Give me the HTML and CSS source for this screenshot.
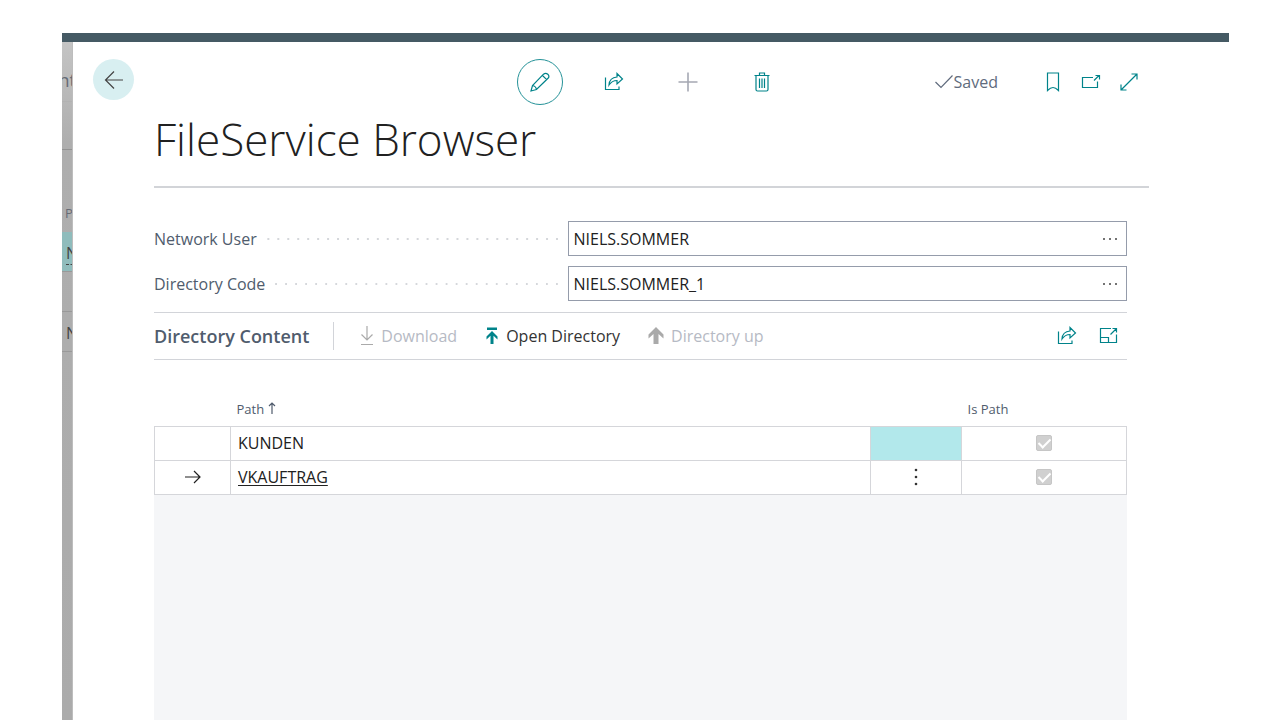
FILE: index.html
```html
<!DOCTYPE html>
<html lang="en">
<head>
  <meta charset="UTF-8">
  <meta name="viewport" content="width=device-width, initial-scale=1.0">
  <title>FileService Browser</title>
  <link rel="stylesheet" href="styles.css">
</head>
<body>

<div class="app">
  <div class="topbar"></div>
  <div class="workspace">

    <!-- list page behind the dialog -->
    <div class="behind">
      <div class="behind-head">nt</div>
      <div class="behind-bar"></div>
      <div class="behind-col">P</div>
      <div class="behind-row active"><span>N</span></div>
      <div class="behind-row"></div>
      <div class="behind-row">N</div>
    </div>

    <main class="dialog">
      <header class="header">
        <button class="back" aria-label="Back">
          <svg width="20" height="20" viewBox="0 0 20 20"><path d="M19 10H1.500M10 1.500L1.500 10L10 18.500"/></svg>
        </button>

        <div class="tools">
          <button class="tool edit" aria-label="Edit">
            <svg width="20" height="20" viewBox="0 0 20 20"><path d="M1 19L2.500 13.500L13.500 2.200Q15.700 .3 17.800 2.300T18 6.300L6.500 17.500ZM12.500 3.500L16.700 7.700M2.500 13.500Q5.800 14 6.500 17.500"/></svg>
          </button>
          <button class="tool" aria-label="Share">
            <svg width="20" height="20" viewBox="0 0 20 20"><path d="M1.500 5.500V17.500H15V14.500"/><path d="M5 13Q5.500 5.500 13 5V1.500L18.500 7L13 12V8.500Q8 8.500 5 13Z"/></svg>
          </button>
          <button class="tool plus" aria-label="New">
            <svg width="20" height="20" viewBox="0 0 20 20"><path d="M10 .5V19.500M.5 10H19.500"/></svg>
          </button>
          <button class="tool" aria-label="Delete">
            <svg width="20" height="20" viewBox="0 0 20 20"><path d="M2.500 3.500H17.500M7.500 3V1H12.500V3M4 4V17.500Q4 19 5.500 19H14.500Q16 19 16 17.500V4M7.500 6.500V16M10 6.500V16M12.500 6.500V16"/></svg>
          </button>
        </div>

        <div class="status">
          <span class="saved">
            <svg width="20" height="16" viewBox="0 0 20 16"><path d="M1.500 8L7 13.500L18.500 1.500"/></svg>Saved
          </span>
          <button class="small" aria-label="Bookmark">
            <svg width="20" height="20" viewBox="0 0 20 20"><path d="M4.500 1H15.500V18.500Q12.500 15.500 10 15.500T4.500 18.500Z"/></svg>
          </button>
          <button class="small" aria-label="Open in new window">
            <svg width="20" height="20" viewBox="0 0 20 20"><path d="M12 5.500H1.500V15.500H16.500V9.500M13 8.500L18 3.500M14.500 3.500H18.500V7.500"/></svg>
          </button>
          <button class="small" aria-label="Expand">
            <svg width="20" height="20" viewBox="0 0 20 20"><path d="M2 18L18 2M12.500 2H18V7.500M2 12.500V18H7.500"/></svg>
          </button>
        </div>
      </header>

      <div class="page">
        <h1>FileService Browser</h1>

        <div class="content">
          <div class="field">
            <label for="network-user"><span>Network User</span></label>
            <div class="lookup">
              <input type="text" id="network-user" value="NIELS.SOMMER">
              <button class="more" aria-label="Look up network user"><svg width="16" height="4" viewBox="0 0 16 4"><circle cx="2" cy="2" r="1"/><circle cx="8" cy="2" r="1"/><circle cx="14" cy="2" r="1"/></svg></button>
            </div>
          </div>
          <div class="field">
            <label for="directory-code"><span>Directory Code</span></label>
            <div class="lookup">
              <input type="text" id="directory-code" value="NIELS.SOMMER_1">
              <button class="more" aria-label="Look up directory code"><svg width="16" height="4" viewBox="0 0 16 4"><circle cx="2" cy="2" r="1"/><circle cx="8" cy="2" r="1"/><circle cx="14" cy="2" r="1"/></svg></button>
            </div>
          </div>

          <div class="section">
            <h2>Directory Content</h2>
            <div class="actions">
              <button class="action" disabled>
                <svg width="14" height="20" viewBox="0 0 14 20"><path d="M7 0V14M1.500 8.500L7 14L12.500 8.500M1 18.500H13"/></svg>Download
              </button>
              <button class="action">
                <svg class="teal" width="14" height="20" viewBox="0 0 14 20"><path class="solid" d="M2 1.500H12V4H2ZM7 5L12.500 10.500V13.500L8.500 9.700V18H5.500V9.700L1.500 13.500V10.500Z"/></svg>Open Directory
              </button>
              <button class="action" disabled>
                <svg width="16" height="20" viewBox="0 0 16 20"><path class="solid" d="M8 1L15.500 8.500V12.500L10.500 8V18H5.500V8L.5 12.500V8.500Z"/></svg>Directory up
              </button>
            </div>
            <div class="section-icons">
              <button class="small" aria-label="Share list">
                <svg width="20" height="20" viewBox="0 0 20 20"><path d="M1.500 5.500V17.500H15V14.500"/><path d="M5 13Q5.500 5.500 13 5V1.500L18.500 7L13 12V8.500Q8 8.500 5 13Z"/></svg>
              </button>
              <button class="small" aria-label="Focus mode">
                <svg width="20" height="20" viewBox="0 0 20 20"><path d="M12 2.500H1.500V16.500H17.500V8.500M1.500 11.500H9.500V16.500M11.500 8.500L17 3M13.500 2.500H17.500V6.500"/></svg>
              </button>
            </div>
          </div>

          <table class="list">
            <colgroup><col class="c-mark"><col><col class="c-menu"><col class="c-bool"></colgroup>
            <thead>
              <tr>
                <th></th>
                <th>Path <svg width="8" height="12" viewBox="0 0 8 12"><path d="M4 12V1M1 4L4 1L7 4"/></svg></th>
                <th></th>
                <th>Is Path</th>
              </tr>
            </thead>
            <tbody>
              <tr>
                <td></td>
                <td>KUNDEN</td>
                <td class="selected"></td>
                <td class="center"><input type="checkbox" aria-label="KUNDEN is path" checked disabled></td>
              </tr>
              <tr>
                <td class="center"><svg width="16" height="14" viewBox="0 0 16 14"><path d="M0 7H15M9 1L15 7L9 13"/></svg></td>
                <td><a href="#">VKAUFTRAG</a></td>
                <td class="center"><button class="dots" aria-label="More options"><svg width="4" height="20" viewBox="0 0 4 20"><circle cx="2" cy="3" r="1.300"/><circle cx="2" cy="10" r="1.300"/><circle cx="2" cy="17" r="1.300"/></svg></button></td>
                <td class="center"><input type="checkbox" aria-label="VKAUFTRAG is path" checked disabled></td>
              </tr>
            </tbody>
          </table>
          <div class="empty"></div>
        </div>
      </div>
    </main>
  </div>
</div>

</body>
</html>
```
FILE: styles.css
```css
* {
  box-sizing: border-box;
}
body {
  margin: 0;
  background: #fff;
  color: #212121;
  font-family: "Open Sans", "Noto Sans", sans-serif;
  font-size: 16px;
  line-height: 20px;
}
button {
  display: flex;
  align-items: center;
  justify-content: center;
  padding: 0;
  border: none;
  background: none;
  color: #00838a;
  font: inherit;
  cursor: pointer;
}
svg {
  display: block;
  flex: none;
  fill: none;
  stroke: currentColor;
  stroke-width: 1.2;
}
circle, .solid {
  fill: currentColor;
  stroke: none;
}

.app {
  display: flex;
  flex-direction: column;
  height: 100vh;
  padding: 33px 51px 0 62px;
  overflow: hidden;
}
.topbar {
  flex: none;
  height: 9px;
  background: #455a64;
}
.workspace {
  display: flex;
  flex: 1;
  min-height: 0;
}

/* dimmed strip */
.behind {
  width: 11px;
  overflow: hidden;
  background: linear-gradient(#c4c4c4, #aeaeae 100px, #ababab);
  border-right: 1px solid #bdbdbd;
  color: #666b75;
}
.behind-head {
  display: flex;
  justify-content: flex-end;
  width: 14px;
  height: 60px;
  padding-top: 28px;
  border-bottom: 1px solid #b2b2b2;
  font-size: 18px;
}
.behind-bar {
  height: 48px;
  border-bottom: 1px solid #929292;
}
.behind-col {
  height: 82px;
  padding: 53px 0 0 3px;
  font-size: 13px;
}
.behind-row {
  height: 40px;
  padding: 11px 0 0 4px;
  border-bottom: 1px solid #999;
  color: #444;
}
.behind-row.active {
  background: #8fbcbc;
}
.behind-row.active span {
  border-bottom: 1px dashed #444;
}

.dialog {
  display: flex;
  flex: 1;
  flex-direction: column;
  min-width: 0;
  background: #fff;
}
.header {
  display: grid;
  grid-template-columns: 1fr auto 1fr;
  align-items: start;
  padding: 17px 20px 0;
}
.back {
  width: 41px;
  height: 41px;
  border-radius: 50%;
  background: #d8eff1;
  color: #444;
}
.tools {
  display: flex;
  gap: 28px;
}
.tool {
  width: 46px;
  height: 46px;
}
.edit {
  border: 1px solid #259298;
  border-radius: 50%;
}
.plus {
  color: #a5a8b3;
}
.plus svg {
  stroke-width: 1.6;
}
.status {
  display: flex;
  align-items: center;
  align-self: center;
  justify-content: flex-end;
  gap: 18px;
  padding-right: 70px;
}
.saved {
  display: flex;
  align-items: center;
  margin-right: 27px;
  color: #606b7d;
}
.small {
  width: 20px;
  height: 20px;
}

.page {
  display: flex;
  flex: 1;
  flex-direction: column;
  padding: 0 80px 0 81px;
}
h1 {
  margin: 0;
  padding-bottom: 12px;
  border-bottom: 2px solid #d2d4d8;
  font-size: 44px;
  font-weight: 300;
  line-height: 69px;
}
.content {
  display: flex;
  flex: 1;
  flex-direction: column;
  padding: 33px 22px 0 0;
}
.field {
  display: grid;
  grid-template-columns: 17fr 23fr;
  margin-bottom: 10px;
}
label {
  display: flex;
  align-items: center;
  padding-right: 2px;
  color: #505c6d;
}
label::after {
  content: "";
  flex: 1;
  height: 2px;
  margin-left: 10px;
  background: linear-gradient(90deg, #d5d7db 2px, transparent 2px) right / 10px 2px round;
}
.lookup {
  display: flex;
  height: 35px;
  border: 1px solid #959cab;
}
.lookup input {
  flex: 1;
  min-width: 0;
  padding: 0 5px;
  border: none;
  outline: none;
  background: none;
  color: #212121;
  font: inherit;
}
.more {
  width: 32px;
  color: #444;
}

.section {
  display: flex;
  align-items: center;
  height: 48px;
  margin-top: 1px;
  border-top: 1px solid #d2d4d9;
  border-bottom: 1px solid #d2d4d9;
}
h2 {
  margin: 0;
  padding-right: 24px;
  color: #505c6d;
  font-size: 18px;
  font-weight: 600;
  line-height: 28px;
  border-right: 1px solid #d2d4d9;
}
.actions {
  display: flex;
  gap: 28px;
  padding-left: 26px;
}
.action {
  gap: 7px;
  color: #333;
}
.action:disabled {
  color: #b6bac4;
}
.action:disabled svg {
  color: #aaa;
}
.teal {
  color: #00838a;
}
.section-icons {
  display: flex;
  gap: 22px;
  margin-left: auto;
  padding-right: 8px;
}

.list {
  width: 100%;
  margin-top: 28px;
  border-collapse: collapse;
  table-layout: fixed;
}
.c-mark {
  width: 76px;
}
.c-menu {
  width: 91px;
}
.c-bool {
  width: 165px;
}
th {
  height: 38px;
  padding: 4px 6px 0;
  color: #505c6d;
  font-size: 13px;
  font-weight: 400;
  text-align: left;
}
th svg {
  display: inline-block;
}
td {
  height: 34px;
  padding: 0 7px;
  border: 1px solid #d5d6da;
}
td a {
  color: inherit;
  text-underline-offset: 2px;
}
.center svg, .dots {
  margin: 0 auto;
}
.dots {
  width: 24px;
  height: 24px;
  color: #333;
}
.center {
  text-align: center;
}
.selected {
  background: #b2e8eb;
}
.list input {
  display: grid;
  place-items: center;
  width: 16px;
  height: 16px;
  margin: 0 auto;
  border: 1px solid #c6c6c6;
  border-radius: 2px;
  background: #d0d0d0;
  appearance: none;
}
.list input::after {
  content: "";
  width: 5px;
  height: 10px;
  margin-bottom: 3px;
  border: solid #fff;
  border-width: 0 2px 2px 0;
  transform: rotate(45deg);
}
.empty {
  flex: 1;
  background: #f5f6f8;
}
```
